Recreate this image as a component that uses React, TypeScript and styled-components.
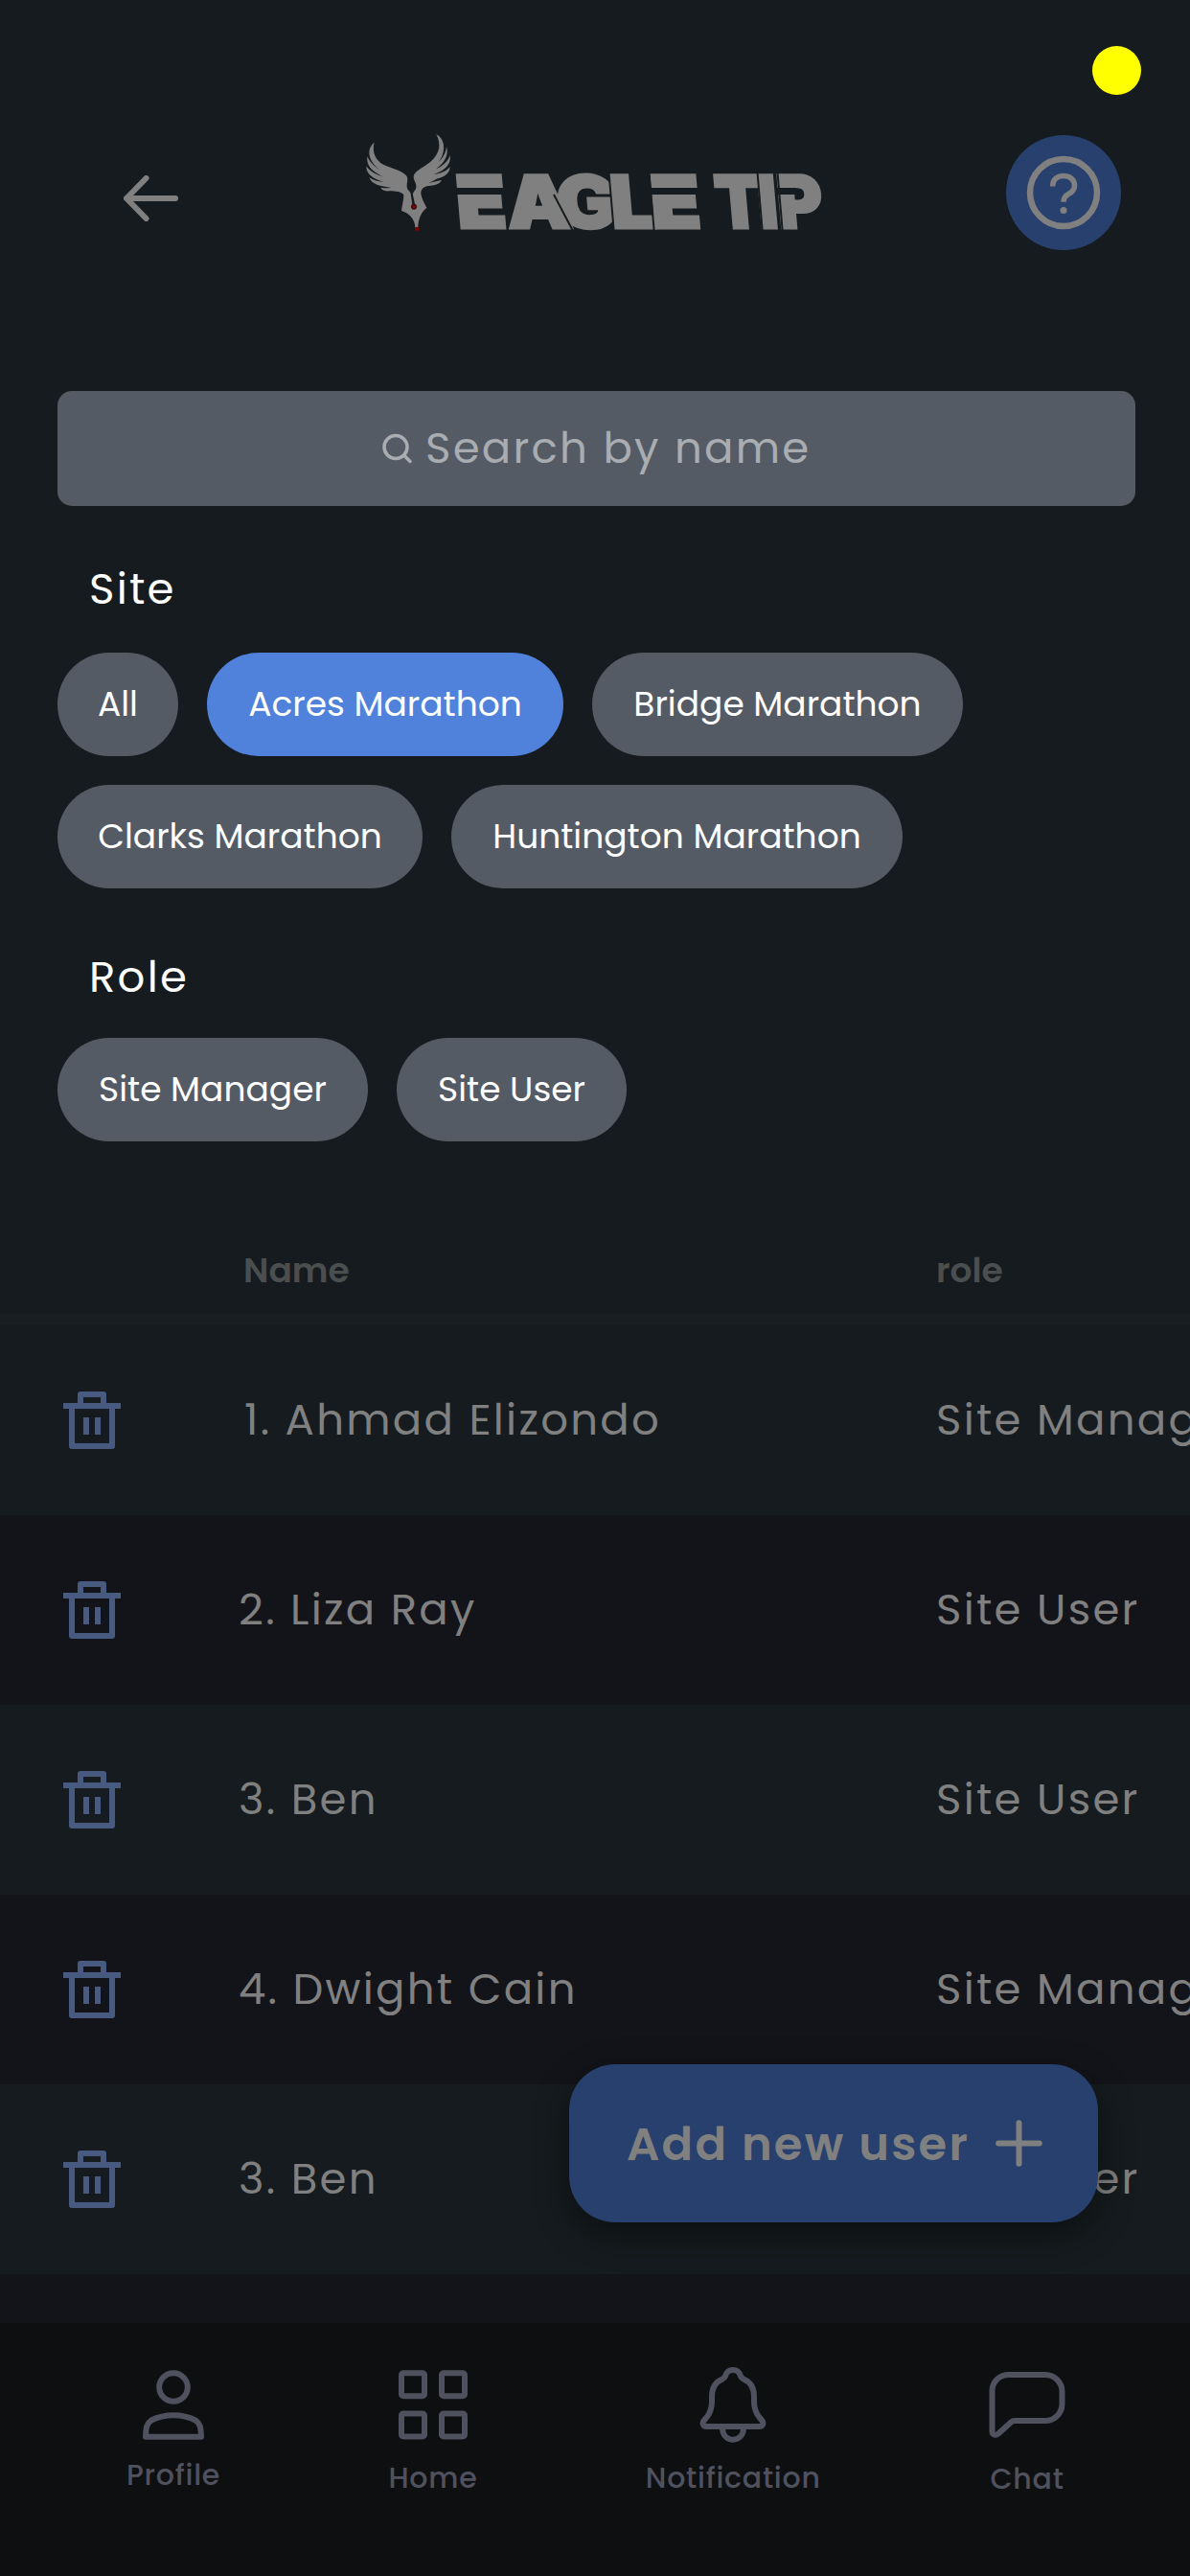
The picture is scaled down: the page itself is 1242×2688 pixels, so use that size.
import React from "react";
import styled, { createGlobalStyle } from "styled-components";

const color = {
  page: "#151b1e",
  rowAlt: "#131419",
  strip: "#181e22",
  nav: "#0e0f11",
  chip: "#545b65",
  chipActive: "#5081db",
  accent: "#28406d",
  muted: "#808080",
  trash: "#495a80",
  navItem: "#50515f",
};

const GlobalStyle = createGlobalStyle`
  * { box-sizing: border-box; }
  body {
    margin: 0;
    background: ${color.page};
    font-family: Poppins, Inter, "Liberation Sans", sans-serif;
    font-feature-settings: "cv11";
  }
  button { font: inherit; font-feature-settings: inherit; border: 0; background: none; padding: 0; }
  svg { display: block; flex: none; }
`;

const Screen = styled.div`
  position: relative;
  display: flex;
  flex-direction: column;
  width: 1242px;
  height: 2688px;
  overflow: hidden;
  background: ${color.page};
`;

const StatusDot = styled.span`
  position: absolute;
  top: 48px;
  right: 51px;
  width: 51px;
  height: 51px;
  border-radius: 50%;
  background: #ffff00;
`;

const Header = styled.header`
  display: flex;
  align-items: flex-start;
  justify-content: space-between;
  height: 408px;
  padding: 132px 72px 0 129px;
  flex: none;
`;

const BackButton = styled.button`
  padding-top: 51px;
`;

const HelpButton = styled.button`
  display: grid;
  place-items: center;
  width: 120px;
  height: 120px;
  margin-top: 9px;
  border-radius: 50%;
  background: ${color.accent};
`;

const SearchField = styled.div`
  display: flex;
  align-items: center;
  flex: none;
  height: 120px;
  margin: 0 57px 0 60px;
  padding-left: 338px;
  gap: 14px;
  border-radius: 15px;
  background: ${color.chip};
  color: #a9adb2;
`;

const Text = styled.span<{ $size?: number; $track?: number; $weight?: number; $indent?: number }>`
  font-size: ${(p) => p.$size ?? 45}px;
  font-weight: ${(p) => p.$weight ?? 400};
  letter-spacing: ${(p) => p.$track ?? 2.25}px;
  padding-left: ${(p) => p.$indent ?? 0}px;
  line-height: 1.2;
  white-space: nowrap;
`;

const FilterGroup = styled.section<{ $gapTop: number; $gapChips: number }>`
  display: flex;
  flex-direction: column;
  flex: none;
  gap: ${(p) => p.$gapChips}px;
  padding: ${(p) => p.$gapTop}px 57px 0 60px;
`;

const FilterTitle = styled.h2`
  margin: 0;
  padding-left: 33px;
  color: #fff;
  font-size: 45px;
  font-weight: 400;
  line-height: 54px;
  letter-spacing: 2.25px;
`;

const ChipList = styled.div`
  display: flex;
  flex-wrap: wrap;
  gap: 30px;
`;

const Chip = styled.button<{ $active?: boolean; $width: number }>`
  width: ${(p) => p.$width}px;
  height: 108px;
  padding: 0 0 2px;
  border-radius: 54px;
  background: ${(p) => (p.$active ? color.chipActive : color.chip)};
  color: #fff;
  font-size: 36px;
  text-align: center;
  white-space: nowrap;
`;

const Table = styled.div`
  display: flex;
  flex-direction: column;
  flex: 1;
  min-height: 0;
  overflow: hidden;
  background: ${color.rowAlt};
`;

const TableRow = styled.div<{ $alt?: boolean }>`
  display: grid;
  grid-template-columns: 183px 728px max-content;
  align-items: center;
  flex: none;
  height: 198px;
  padding-left: 66px;
  background: ${(p) => (p.$alt ? color.rowAlt : color.page)};
  color: ${color.muted};

  ${Text} { margin-bottom: 1px; }
`;

const TableHead = styled(TableRow)`
  height: 180px;
  padding-top: 90px;
  color: #4b4e4f;
`;

const Strip = styled.div`
  flex: none;
  height: 12px;
  background: ${color.strip};
`;

const AddButton = styled.button`
  position: absolute;
  top: 2154px;
  right: 96px;
  display: flex;
  align-items: center;
  justify-content: space-between;
  width: 552px;
  height: 165px;
  padding: 0 58px 0 60px;
  border-radius: 48px;
  background: ${color.accent};
  box-shadow: 0 12px 36px rgba(0, 0, 0, 0.42);
  color: ${color.muted};

  ${Text} { padding-top: 2px; }
`;

const NavBar = styled.nav`
  display: flex;
  align-items: flex-start;
  justify-content: space-between;
  flex: none;
  height: 264px;
  padding: 46px 130px 0 132px;
  background: ${color.nav};
  color: ${color.navItem};
`;

const NavItem = styled.a<{ $gap: number }>`
  display: flex;
  flex-direction: column;
  align-items: center;
  gap: ${(p) => p.$gap}px;

  ${Text} { line-height: 40px; }
`;

function Logo() {
  return (
    <svg width="490" height="132" viewBox="373 132 490 132" role="img" aria-label="Eagle Tip">
      <g transform="translate(360 120) scale(0.33333)">
        <path
          fill={color.muted}
          d="M92 86 C84 115 95 142 122 156 C148 168 186 176 195 194 C199 208 188 222 199 236
             C205 241 207 246 207 254 L211 280 L219 280 L213 250 C212 240 220 238 223 228
             C226 214 214 205 215 192 C219 172 248 164 268 146 C298 120 302 92 286 60
             C308 72 315 98 305 126 C302 134 297 142 292 148 C307 134 317 116 318 98
             C325 122 315 142 298 158 L284 170 C306 160 322 146 329 126
             C333 150 318 168 292 180 L278 186 C304 182 320 174 329 162
             C329 180 314 194 290 199 L262 214 C280 208 292 206 303 204
             C296 218 280 220 262 222 C246 224 238 232 238 246 C240 262 250 278 256 291
             C240 302 229 325 229 353 L220 353 C220 330 205 308 177 300
             C180 282 184 262 184 250 C176 240 160 238 140 238 C126 239 116 236 112 227
             C122 230 134 229 146 228 C110 222 84 218 76 195 C88 204 104 208 122 210
             C86 200 66 184 67 160 C78 176 96 186 120 194 C84 176 66 158 70 130
             C80 150 92 162 112 174 C78 150 62 110 92 86Z"
        />
        <circle cx="216" cy="287" r="8" fill="#800000" stroke={color.page} strokeWidth="3" />
        <circle cx="225" cy="357" r="6.5" fill="#800000" />
      </g>
      <g
        fill={color.muted}
        stroke={color.muted}
        strokeWidth="3"
        fontFamily="Inter, sans-serif"
        fontSize="76"
        fontWeight="900"
      >
        <text transform="translate(0 238) skewX(5) scale(1.12 1)" x="427 474 520.500 570 608">EAGLE</text>
        <text transform="translate(0 238) skewX(5) scale(0.95 1)" x="788 834.500 856">TIP</text>
      </g>
      <path fill={color.page} d="M473 196h56v7h-56z M676 196h56v7h-56z M811 196h20v7h-20z" />
      <path
        fill="none"
        stroke={color.page}
        strokeWidth="2"
        d="M578 203L598 241 M635.500 180L640.700 241 M677.500 180L682.700 241 M790.500 180L795.700 241 M811.500 180L816.700 241"
      />
    </svg>
  );
}

function ArrowLeft() {
  return (
    <svg width="57" height="48" viewBox="0 0 57 48" fill="none" stroke={color.muted} strokeWidth="6" strokeLinecap="round" strokeLinejoin="round">
      <path d="M54 24H3M23.500 3L3 24L23.500 45" />
    </svg>
  );
}

function HelpIcon() {
  return (
    <svg width="78" height="78" viewBox="0 0 78 78" fill="none" stroke={color.muted}>
      <circle cx="39" cy="39" r="35" strokeWidth="6.500" />
      <path d="M27.800 32.500V31C27.800 25.500 32.500 21.500 39 21.500C46 21.500 50.500 25.800 50.500 31.500C50.500 36 48 38.500 44.500 40.300C41 42.200 39 44 39 48.800" strokeWidth="5.600" />
      <circle cx="39" cy="57.500" r="3.500" fill={color.muted} stroke="none" />
    </svg>
  );
}

function SearchIcon() {
  return (
    <svg width="32" height="32" viewBox="0 0 32 32" fill="none" stroke="currentColor" strokeWidth="3.500" strokeLinecap="round">
      <circle cx="15" cy="14.500" r="12" />
      <path d="M23.500 23L30 29.500" />
    </svg>
  );
}

function TrashIcon() {
  return (
    <svg width="60" height="60" viewBox="0 0 60 60" fill={color.trash}>
      <path
        fillRule="evenodd"
        d="M15 12V3Q15 0 18 0H42Q45 0 45 3V12H60V18H54V57Q54 60 51 60H9Q6 60 6 57V18H0V12Z
           M21 12H39V6H21Z M12 18V54H48V18Z"
      />
      <path d="M21 27h6v18h-6z M33 27h6v18h-6z" />
    </svg>
  );
}

function PlusIcon() {
  return (
    <svg width="49" height="49" viewBox="0 0 49 49" stroke="currentColor" strokeWidth="6" strokeLinecap="round">
      <path d="M24.500 3.200V45.800M3.200 24.500H45.800" />
    </svg>
  );
}

const navShapes = {
  profile: (
    <>
      <circle cx="40" cy="21" r="14.800" />
      <path d="M11 72.700C11.300 62 12.500 58.500 17 55.500C24 52 31 50.300 40 50.300S56 52 63 55.500C67.500 58.500 68.700 62 69 72.700Z" />
    </>
  ),
  home: (
    <>
      <rect x="7" y="6.300" width="24" height="24" rx="2" />
      <rect x="49" y="6.300" width="24" height="24" rx="2" />
      <rect x="7" y="48.500" width="24" height="24" rx="2" />
      <rect x="49" y="48.500" width="24" height="24" rx="2" />
    </>
  ),
  bell: (
    <>
      <path d="M40 3C35.500 3 33 6 32 9.500C31.500 11 30 12 28.500 12.800C21 16 18 22 18 31V36C18 43 16 48.500 12 53L9.500 56C7.500 59 9 62 12.500 62H67.500C71 62 72.500 59 70.500 56L68 53C64 48.500 62 43 62 36V31C62 22 59 16 51.500 12.800C50 12 48.500 11 48 9.500C47 6 44.500 3 40 3Z" />
      <path d="M29 64C29 71 34 75.700 40 75.700S51 71 51 64" />
    </>
  ),
  chat: (
    <path d="M20.500 8H59A17.500 17.500 0 0 1 76.500 25.500V38.500A17.500 17.500 0 0 1 59 56H27A5 5 0 0 0 23.500 57.300L10 69.500C7.500 71.500 3.500 71 3.500 67V25A17 17 0 0 1 20.500 8Z" />
  ),
};

function NavIcon({ name }: { name: keyof typeof navShapes }) {
  return (
    <svg width="80" height="80" viewBox="0 0 80 80" fill="none" stroke="currentColor" strokeWidth="6" strokeLinejoin="round">
      {navShapes[name]}
    </svg>
  );
}

const sites = [
  { label: "All", width: 126 },
  { label: "Acres Marathon", width: 372, active: true },
  { label: "Bridge Marathon", width: 387 },
  { label: "Clarks Marathon", width: 381 },
  { label: "Huntington Marathon", width: 471 },
];

const roles = [
  { label: "Site Manager", width: 324 },
  { label: "Site User", width: 240 },
];

const users = [
  { name: "1. Ahmad Elizondo", indent: 6, role: "Site Manager" },
  { name: "2. Liza Ray", role: "Site User" },
  { name: "3. Ben", role: "Site User" },
  { name: "4. Dwight Cain", role: "Site Manager" },
  { name: "3. Ben", role: "Site User" },
];

const navItems: { label: string; icon: keyof typeof navShapes; gap: number }[] = [
  { label: "Profile", icon: "profile", gap: 13 },
  { label: "Home", icon: "home", gap: 16 },
  { label: "Notification", icon: "bell", gap: 16 },
  { label: "Chat", icon: "chat", gap: 17 },
];

export default function App() {
  return (
    <>
      <GlobalStyle />
      <Screen>
        <Header>
          <BackButton aria-label="Back"><ArrowLeft /></BackButton>
          <Logo />
          <HelpButton aria-label="Help"><HelpIcon /></HelpButton>
        </Header>
        <StatusDot />

        <SearchField>
          <SearchIcon />
          <Text>Search by name</Text>
        </SearchField>

        <FilterGroup $gapTop={60} $gapChips={39}>
          <FilterTitle>Site</FilterTitle>
          <ChipList>
            {sites.map((s) => (
              <Chip key={s.label} $active={s.active} $width={s.width}>{s.label}</Chip>
            ))}
          </ChipList>
        </FilterGroup>

        <FilterGroup $gapTop={66} $gapChips={36}>
          <FilterTitle>Role</FilterTitle>
          <ChipList>
            {roles.map((r) => (
              <Chip key={r.label} $width={r.width}>{r.label}</Chip>
            ))}
          </ChipList>
        </FilterGroup>

        <Table>
          <TableHead>
            <span />
            <Text $size={36} $weight={600} $track={0} $indent={5}>Name</Text>
            <Text $size={36} $weight={600} $track={0}>role</Text>
          </TableHead>
          <Strip />
          {users.map((u, i) => (
            <TableRow key={i} $alt={i % 2 === 1}>
              <TrashIcon />
              <Text $indent={u.indent}>{u.name}</Text>
              <Text>{u.role}</Text>
            </TableRow>
          ))}
        </Table>

        <AddButton>
          <Text $size={48} $weight={600} $track={2.25}>Add new user</Text>
          <PlusIcon />
        </AddButton>

        <NavBar>
          {navItems.map((n) => (
            <NavItem key={n.label} $gap={n.gap}>
              <NavIcon name={n.icon} />
              <Text $size={30} $weight={500} $track={0.75}>{n.label}</Text>
            </NavItem>
          ))}
        </NavBar>
      </Screen>
    </>
  );
}
